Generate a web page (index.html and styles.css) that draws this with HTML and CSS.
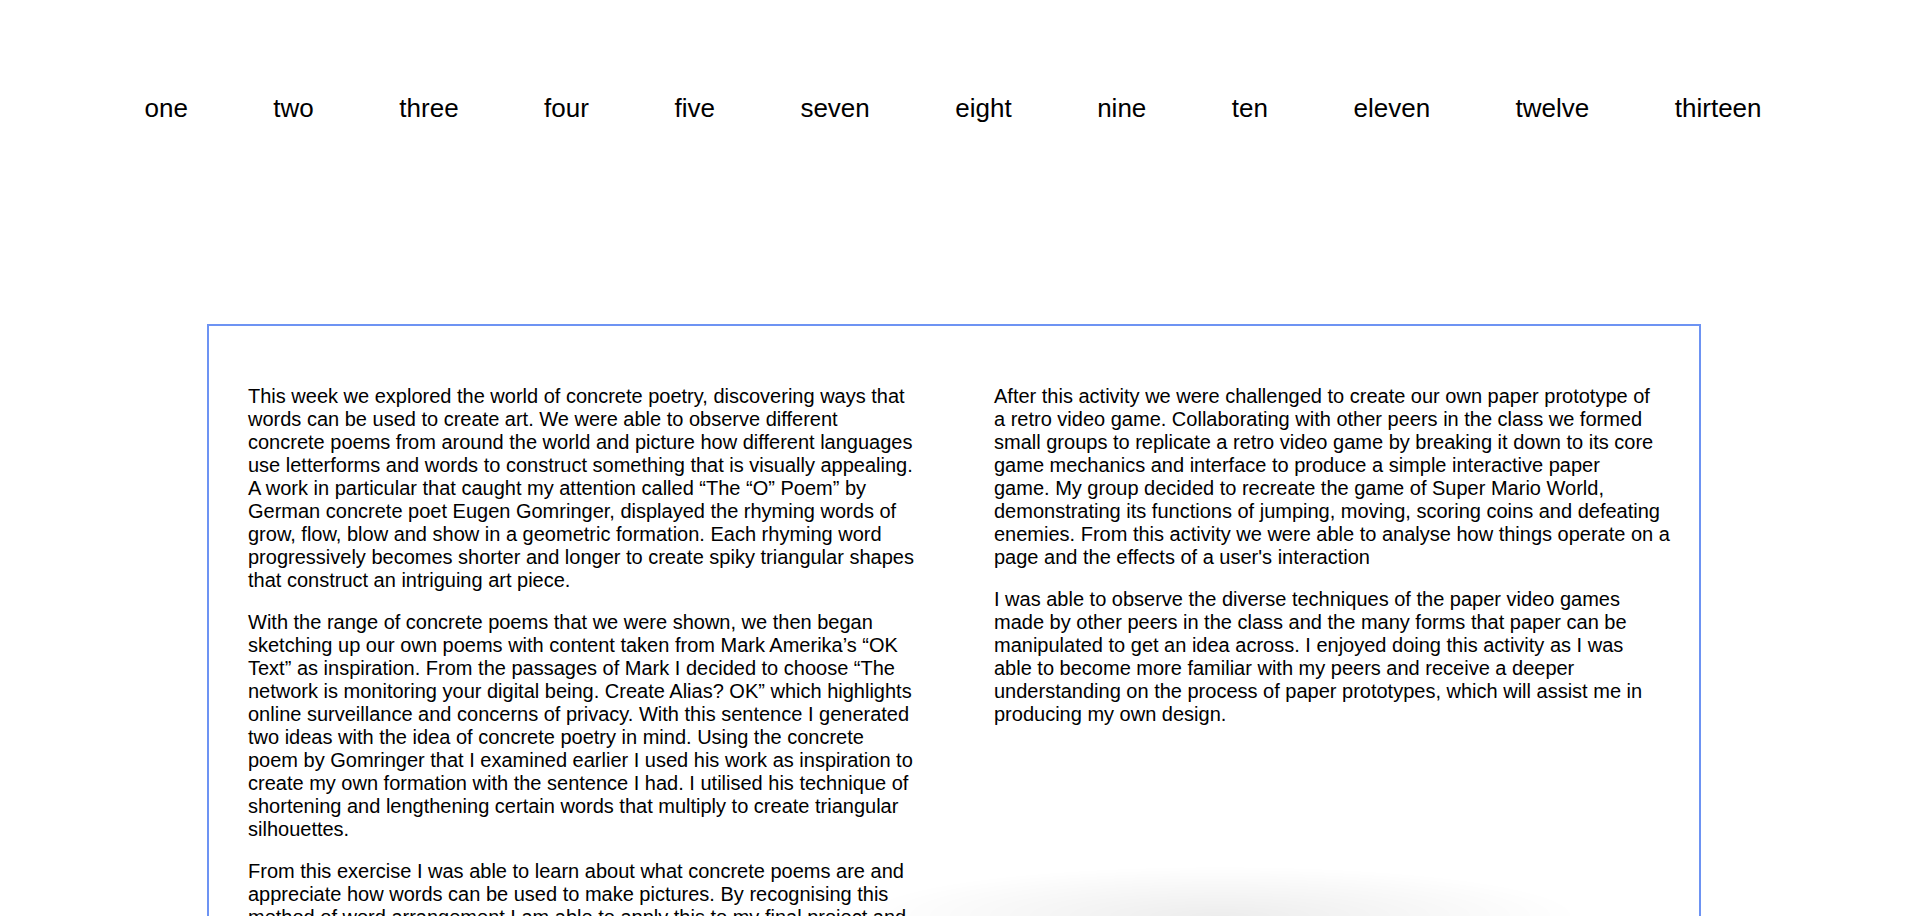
FILE: index.html
```html
<!DOCTYPE html>
<html lang="en">
<head>
<meta charset="utf-8">
<title>Concrete poetry</title>
<link rel="stylesheet" href="styles.css">
</head>
<body>
<nav class="nav">
  <a class="nav-item" href="#">one</a>
  <a class="nav-item" href="#">two</a>
  <a class="nav-item" href="#">three</a>
  <a class="nav-item" href="#">four</a>
  <a class="nav-item" href="#">five</a>
  <a class="nav-item" href="#">seven</a>
  <a class="nav-item" href="#">eight</a>
  <a class="nav-item" href="#">nine</a>
  <a class="nav-item" href="#">ten</a>
  <a class="nav-item" href="#">eleven</a>
  <a class="nav-item" href="#">twelve</a>
  <a class="nav-item" href="#">thirteen</a>
</nav>
<main class="card">
  <div class="col col-left">
    <p>This week we explored the world of concrete poetry, discovering ways that words can be used to create art. We were able to observe different concrete poems from around the world and picture how different languages use letterforms and words to construct something that is visually appealing. A work in particular that caught my attention called “The “O” Poem” by German concrete poet Eugen Gomringer, displayed the rhyming words of grow, flow, blow and show in a geometric formation. Each rhyming word progressively becomes shorter and longer to create spiky triangular shapes that construct an intriguing art piece.</p>
    <p>With the range of concrete poems that we were shown, we then began sketching up our own poems with content taken from Mark Amerika’s “OK Text” as inspiration. From the passages of Mark I decided to choose “The network is monitoring your digital being. Create Alias? OK” which highlights online surveillance and concerns of privacy. With this sentence I generated two ideas with the idea of concrete poetry in mind. Using the concrete poem by Gomringer that I examined earlier I used his work as inspiration to create my own formation with the sentence I had. I utilised his technique of shortening and lengthening certain words that multiply to create triangular silhouettes.</p>
    <p>From this exercise I was able to learn about what concrete poems are and appreciate how words can be used to make pictures. By recognising this method of word arrangement I am able to apply this to my final project and explore new ways of presenting text.</p>
  </div>
  <div class="col col-right">
    <p>After this activity we were challenged to create our own paper prototype of a&nbsp;retro video game. Collaborating with other peers in the class we formed small groups to replicate a retro video game by breaking it down to its core game mechanics and interface to produce a simple interactive paper game.&nbsp;My group decided to recreate the game of Super Mario World, demonstrating its functions of jumping, moving, scoring coins and defeating enemies. From this activity we were able to analyse how things operate on a page and the effects of a user's interaction</p>
    <p>I was able to observe the diverse techniques of the paper video games made by other peers in the class and the many forms that paper can be manipulated to get an idea across. I enjoyed doing this activity as I was able&nbsp;to become more familiar with my peers and receive a deeper understanding on the process of paper prototypes, which will assist me in producing my own design.</p>
  </div>
</main>
<div class="shade"></div>
</body>
</html>
```

FILE: styles.css
```css
html, body {
  margin: 0;
  padding: 0;
  background: #ffffff;
}

body {
  font-family: "Liberation Sans", Arial, Helvetica, sans-serif;
  color: #000;
}

.nav {
  display: flex;
  justify-content: center;
  gap: 85.5px;
  padding-top: 93px;
  height: 230px;
  box-sizing: border-box;
}

.nav-item {
  font-size: 26px;
  line-height: 30px;
  color: #000;
  text-decoration: none;
}

.card {
  width: 1494px;
  box-sizing: border-box;
  margin: 94px 0 0 207px;
  border: 2px solid #6d93f3;
  padding: 59px 26px 40px 39px;
  display: grid;
  grid-template-columns: 669px 677px;
  column-gap: 77px;
  align-items: start;
}

.col p {
  margin: 0 0 19px;
  font-size: 20px;
  line-height: 23px;
}

.shade {
  position: fixed;
  left: 860px;
  bottom: 0;
  width: 720px;
  height: 50px;
  background: radial-gradient(ellipse 50% 100% at 50% 100%, rgba(0,0,0,0.07), rgba(0,0,0,0) 100%);
  pointer-events: none;
}
```
